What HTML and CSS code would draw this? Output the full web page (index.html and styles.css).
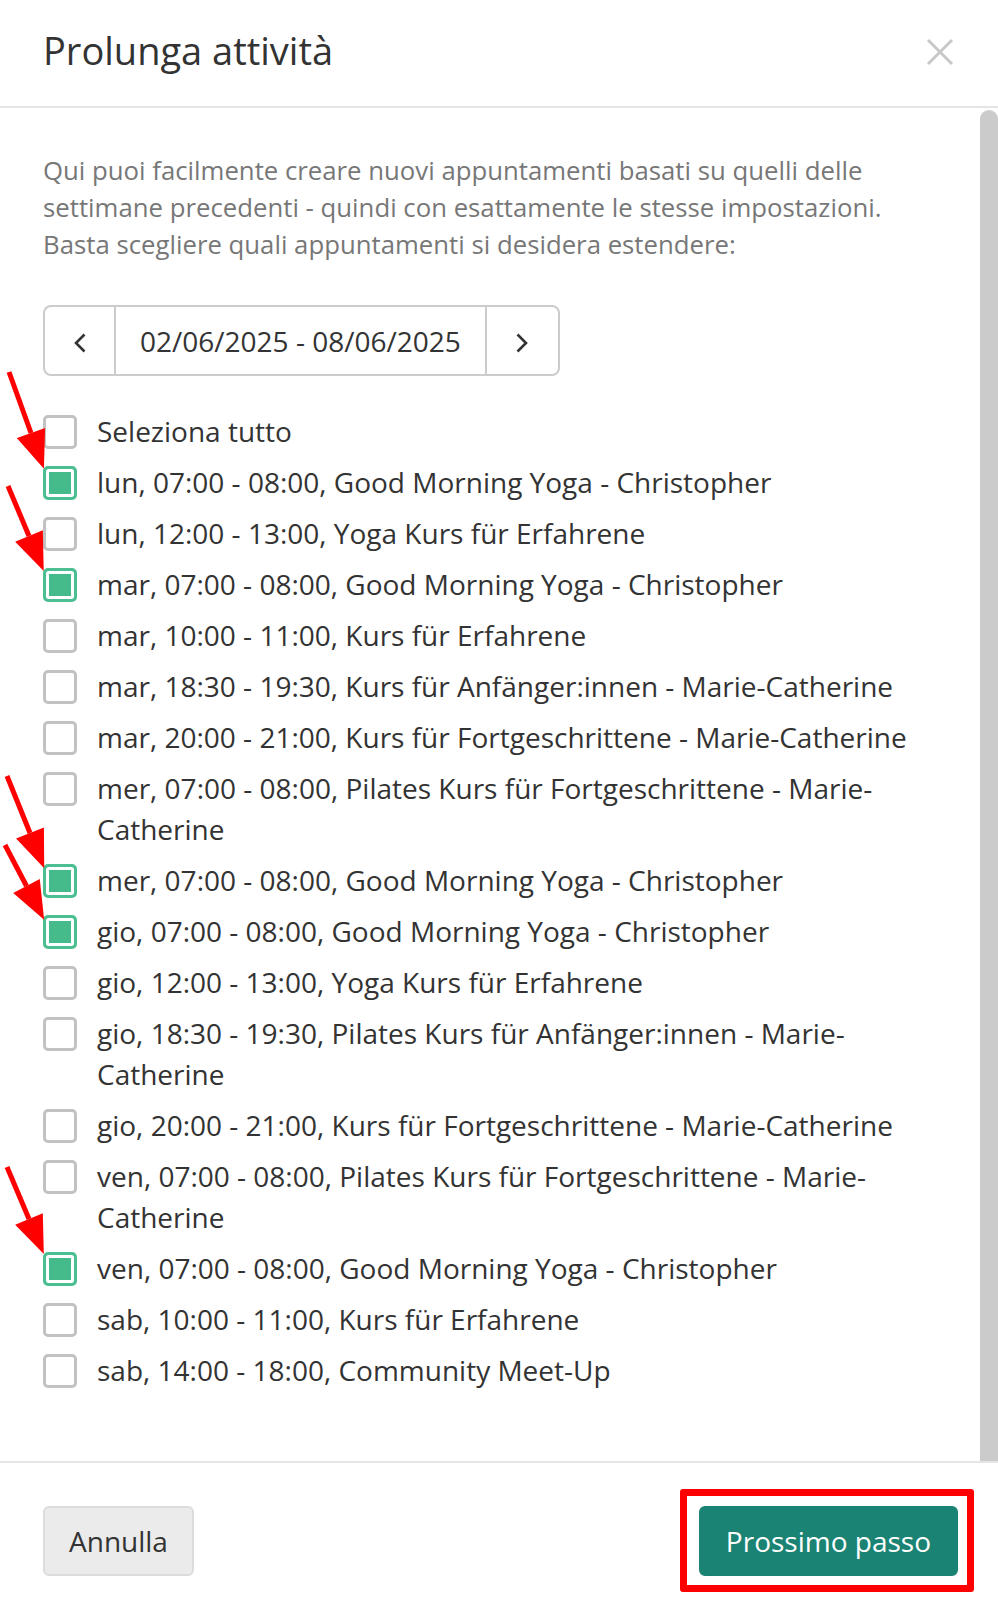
FILE: index.html
```html
<!DOCTYPE html>
<html lang="it">
<head>
    <meta charset="UTF-8">
    <meta name="viewport" content="width=device-width, initial-scale=1.0">
    <title>Prolunga attività</title>
    <link rel="stylesheet" href="styles.css">
</head>
<body>
    <div class="modal">
        <div class="modal-header">
            <h4 class="modal-title">Prolunga attività</h4>
            <button class="close" type="button" aria-label="Chiudi">
                <svg width="28" height="28" viewBox="0 0 28 28"><path d="M2 2 L26 26 M26 2 L2 26" /></svg>
            </button>
        </div>

        <div class="modal-body">
            <div class="body-content">
                <p class="intro">Qui puoi facilmente creare nuovi appuntamenti basati su quelli delle settimane precedenti - quindi con esattamente le stesse impostazioni. Basta scegliere quali appuntamenti si desidera estendere:</p>

                <div class="week-picker">
                    <button class="week-nav prev" type="button" aria-label="Settimana precedente">
                        <svg width="12" height="20" viewBox="0 0 12 20"><polyline points="10.5,1.5 2,10 10.5,18.5" /></svg>
                    </button>
                    <span class="week-label">02/06/2025 - 08/06/2025</span>
                    <button class="week-nav next" type="button" aria-label="Settimana successiva">
                        <svg width="12" height="20" viewBox="0 0 12 20"><polyline points="1.5,1.5 10,10 1.5,18.5" /></svg>
                    </button>
                </div>

                <ul class="slots">
                    <li><label><input type="checkbox" class="check"><span>Seleziona tutto</span></label></li>
                    <li><label><input type="checkbox" class="check" checked><span>lun, 07:00 - 08:00, Good Morning Yoga - Christopher</span></label></li>
                    <li><label><input type="checkbox" class="check"><span>lun, 12:00 - 13:00, Yoga Kurs für Erfahrene</span></label></li>
                    <li><label><input type="checkbox" class="check" checked><span>mar, 07:00 - 08:00, Good Morning Yoga - Christopher</span></label></li>
                    <li><label><input type="checkbox" class="check"><span>mar, 10:00 - 11:00, Kurs für Erfahrene</span></label></li>
                    <li><label><input type="checkbox" class="check"><span>mar, 18:30 - 19:30, Kurs für Anfänger:innen - Marie-Catherine</span></label></li>
                    <li><label><input type="checkbox" class="check"><span>mar, 20:00 - 21:00, Kurs für Fortgeschrittene - Marie-Catherine</span></label></li>
                    <li><label><input type="checkbox" class="check"><span>mer, 07:00 - 08:00, Pilates Kurs für Fortgeschrittene - Marie-Catherine</span></label></li>
                    <li><label><input type="checkbox" class="check" checked><span>mer, 07:00 - 08:00, Good Morning Yoga - Christopher</span></label></li>
                    <li><label><input type="checkbox" class="check" checked><span>gio, 07:00 - 08:00, Good Morning Yoga - Christopher</span></label></li>
                    <li><label><input type="checkbox" class="check"><span>gio, 12:00 - 13:00, Yoga Kurs für Erfahrene</span></label></li>
                    <li><label><input type="checkbox" class="check"><span>gio, 18:30 - 19:30, Pilates Kurs für Anfänger:innen - Marie-Catherine</span></label></li>
                    <li><label><input type="checkbox" class="check"><span>gio, 20:00 - 21:00, Kurs für Fortgeschrittene - Marie-Catherine</span></label></li>
                    <li><label><input type="checkbox" class="check"><span>ven, 07:00 - 08:00, Pilates Kurs für Fortgeschrittene - Marie-Catherine</span></label></li>
                    <li><label><input type="checkbox" class="check" checked><span>ven, 07:00 - 08:00, Good Morning Yoga - Christopher</span></label></li>
                    <li><label><input type="checkbox" class="check"><span>sab, 10:00 - 11:00, Kurs für Erfahrene</span></label></li>
                    <li><label><input type="checkbox" class="check"><span>sab, 14:00 - 18:00, Community Meet-Up</span></label></li>
                </ul>
            </div>
            <div class="scroll-track"><div class="scroll-thumb"></div></div>
        </div>

        <div class="modal-footer">
            <button class="btn btn-default" type="button">Annulla</button>
            <span class="marked">
                <button class="btn btn-primary" type="button">Prossimo passo</button>
            </span>
        </div>
    </div>

    <!-- red annotation arrows drawn over the list -->
    <svg class="arrows" width="998" height="1613" viewBox="0 0 998 1613">
        <defs>
            <marker id="head" markerUnits="userSpaceOnUse" markerWidth="40" markerHeight="30" viewBox="0 0 38 30" refX="0" refY="15" orient="auto">
                <path d="M0 0 L38 15 L0 30 Z" />
            </marker>
        </defs>
        <line x1="9" y1="372" x2="31" y2="433" />
        <line x1="8" y1="486" x2="29" y2="536" />
        <line x1="7" y1="776" x2="30" y2="833" />
        <line x1="5" y1="845" x2="26.5" y2="886" />
        <line x1="7" y1="1167" x2="29" y2="1219" />
    </svg>
</body>
</html>
```

FILE: styles.css
```css
html, body {
    margin: 0;
    padding: 0;
}
body {
    font-family: "Open Sans", "DejaVu Sans", sans-serif;
    color: #333;
    background: #fff;
}
button {
    font: inherit;
    color: inherit;
    background: none;
    border: none;
    padding: 0;
    cursor: pointer;
}

.modal {
    display: flex;
    flex-direction: column;
    height: 100vh;
}

/* header */
.modal-header {
    display: flex;
    justify-content: space-between;
    align-items: flex-start;
    padding: 24px 44px 30px 43px;
    border-bottom: 2px solid #e5e5e5;
}
.modal-title {
    margin: 0;
    font-size: 38px;
    font-weight: 400;
    line-height: 52px;
    color: #333;
}
.close {
    margin-top: 14px;
    width: 28px;
    height: 28px;
}
.close svg {
    display: block;
}
.close path {
    stroke: #c8c8c8;
    stroke-width: 3;
    fill: none;
}

/* body */
.modal-body {
    flex: 1;
    display: flex;
    min-height: 0;
}
.body-content {
    flex: 1;
    padding: 44px 50px 40px 43px;
    overflow: hidden;
}
.scroll-track {
    width: 18px;
    padding-top: 2px;
    display: flex;
}
.scroll-thumb {
    flex: 1;
    background: #cbcbcb;
    border-radius: 9px 9px 0 0;
}
.intro {
    margin: 0;
    font-size: 25.75px;
    line-height: 37px;
    color: #777;
}

.week-picker {
    display: inline-flex;
    margin-top: 42px;
    height: 67px;
    border: 2px solid #ccc;
    border-radius: 8px;
}
.week-nav {
    width: 71px;
    display: flex;
    align-items: center;
    justify-content: center;
    padding-top: 4px;
}
.week-nav polyline {
    fill: none;
    stroke: #333;
    stroke-width: 2.6;
}
.week-nav.prev {
    border-right: 2px solid #ccc;
}
.week-nav.next {
    width: 73px;
    border-left: 2px solid #ccc;
}
.week-label {
    display: flex;
    align-items: center;
    padding: 0 24px;
    font-size: 28px;
    color: #333;
}

.slots {
    list-style: none;
    margin: 35px 0 0;
    padding: 0;
}
.slots li {
    margin-bottom: 10px;
}
.slots label {
    display: flex;
    align-items: flex-start;
    font-size: 28px;
    line-height: 41px;
    color: #333;
    cursor: pointer;
}
.check {
    appearance: none;
    -webkit-appearance: none;
    flex-shrink: 0;
    width: 34px;
    height: 34px;
    margin: 4px 20px 0 0;
    border: 3px solid #c2c2c2;
    border-radius: 5px;
    background: #fff;
    cursor: pointer;
}
.check:checked {
    border-color: #4cbf92;
    background: #45ba8b;
    box-shadow: inset 0 0 0 3px #fff;
}

/* footer */
.modal-footer {
    display: flex;
    justify-content: space-between;
    align-items: center;
    padding: 43px 40px 37px 43px;
    border-top: 2px solid #e5e5e5;
}
.btn {
    font-size: 28px;
    line-height: 40px;
    padding: 13px 24px;
    border: 2px solid transparent;
    border-radius: 6px;
}
.btn-default {
    background: #ebebeb;
    border-color: #dcdcdc;
    color: #333;
}
.btn-primary {
    display: block;
    padding: 13px 25px;
    background: #1a8373;
    border-color: #1a8373;
    color: #fff;
}

/* annotation frame around the next button */
.marked {
    display: block;
    padding: 10px 9px 9px 12px;
    margin: -17px -16px -16px -19px;
    border: 7px solid #ff0000;
    border-radius: 3px;
}

/* annotation overlay */
.arrows {
    position: absolute;
    top: 0;
    left: 0;
    pointer-events: none;
}
.arrows line {
    stroke: #ff0000;
    stroke-width: 5;
    marker-end: url(#head);
}
.arrows marker path {
    fill: #ff0000;
}
```
